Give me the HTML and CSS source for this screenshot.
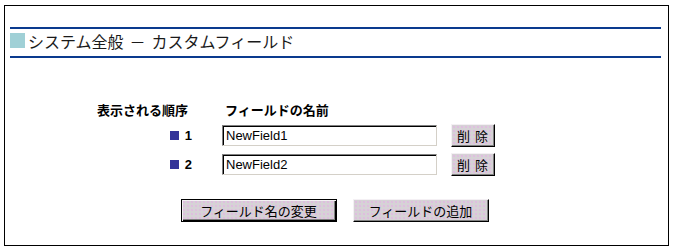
FILE: index.html
```html
<!DOCTYPE html>
<html lang="ja">
<head>
<meta charset="utf-8">
<title>システム全般 － カスタムフィールド</title>
<link rel="stylesheet" href="styles.css">
</head>
<body>
<div class="frame">
  <div class="header">
    <span class="title-mark"></span>
    <span class="title">システム全般<span class="dash">－</span>カスタムフィールド</span>
  </div>
  <div class="list">
    <div class="col-head order-head">表示される順序</div>
    <div class="col-head name-head">フィールドの名前</div>
    <div></div>

    <div class="order"><span class="bullet"></span><span class="num">1</span></div>
    <div class="name"><input class="field" type="text" value="NewField1"></div>
    <div class="act"><button class="btn del">削&nbsp;除</button></div>

    <div class="order"><span class="bullet"></span><span class="num">2</span></div>
    <div class="name"><input class="field" type="text" value="NewField2"></div>
    <div class="act"><button class="btn del">削&nbsp;除</button></div>
  </div>
  <div class="actions">
    <button class="btn big default">フィールド名の変更</button>
    <button class="btn big add">フィールドの追加</button>
  </div>
</div>
</body>
</html>
```

FILE: styles.css
```css
html, body {
  margin: 0;
  padding: 0;
  background: #ffffff;
}

body {
  font-family: "Noto Sans CJK JP", "Liberation Sans", sans-serif;
  color: #000;
}

.frame {
  box-sizing: border-box;
  margin: 5px 0 0 4px;
  width: 665px;
  height: 241px;
  border: 1px solid #000;
  padding: 21px 7px 0 5px;
}

.header {
  display: flex;
  align-items: flex-start;
  border-top: 2px solid #0a3a8e;
  border-bottom: 2px solid #0a3a8e;
  padding-top: 4px;
  box-sizing: content-box;
  height: 23px;
}

.title-mark {
  width: 15px;
  height: 15px;
  background: #a0d0d6;
  flex: none;
}

.title {
  margin-left: 3px;
  font-size: 16px;
  line-height: 17px;
  color: #1a1a1a;
  white-space: nowrap;
}

.dash {
  margin: 0 6px;
}

.list {
  display: grid;
  grid-template-columns: 130px 229px 44px;
  grid-template-rows: 16px 23px 23px;
  row-gap: 6px;
  margin: 44px 0 0 82px;
}

.col-head {
  font-size: 13px;
  line-height: 16px;
  font-weight: bold;
  white-space: nowrap;
}

.order-head {
  text-align: right;
  padding-right: 34px;
}

.name-head {
  padding-left: 3px;
}

.order {
  display: flex;
  justify-content: flex-end;
  align-items: center;
  padding-right: 30px;
}

.bullet {
  width: 9px;
  height: 9px;
  background: #333399;
  margin-right: 6px;
}

.num {
  font-family: "Liberation Sans", Arial, sans-serif;
  font-weight: bold;
  font-size: 13px;
  line-height: 16px;
}

.name {
  display: flex;
  align-items: center;
}

.field {
  box-sizing: border-box;
  width: 215px;
  height: 21px;
  margin: 0;
  padding: 0 0 0 3px;
  border: 1px solid;
  border-color: #808080 #d4d0c8 #d4d0c8 #808080;
  box-shadow: inset 1px 1px 0 #000;
  font-family: "Liberation Sans", Arial, sans-serif;
  font-size: 13px;
  color: #000;
  background: #fff;
  outline: none;
}

.act {
  display: flex;
  align-items: center;
  justify-content: flex-end;
}

.btn {
  box-sizing: border-box;
  margin: 0;
  padding: 0;
  font-family: "Noto Sans CJK JP", "Liberation Sans", sans-serif;
  font-size: 13px;
  color: #000;
  background-color: #d6d2d6;
  background-image: radial-gradient(circle, #e4b4e4 0.6px, transparent 0.9px);
  background-size: 4px 4px;
  border: 1px solid;
  border-color: #f4f0f4 #000 #000 #f4f0f4;
  box-shadow: inset -1px -1px 0 #808080;
  cursor: default;
}

.del {
  width: 44px;
  height: 23px;
  line-height: 19px;
  letter-spacing: 1px;
}

.actions {
  display: flex;
  justify-content: center;
  gap: 16px;
  margin-top: 23px;
  padding-right: 2px;
}

.big {
  height: 23px;
  line-height: 19px;
}

.default {
  width: 156px;
  border: 1px solid #000;
  box-shadow: inset 1px 1px 0 #f4f0f4, inset -1px -1px 0 #000, inset -2px -2px 0 #808080;
}

.add {
  width: 136px;
}
```
